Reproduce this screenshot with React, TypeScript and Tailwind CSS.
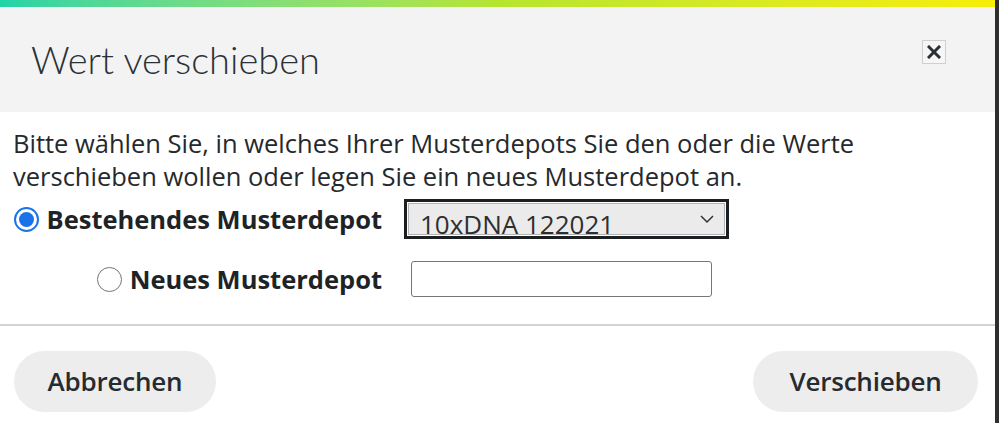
import React from 'react';

const Radio = ({ checked }: { checked?: boolean }) =>
  checked ? (
    <span className="flex h-[25px] w-[25px] shrink-0 items-center justify-center rounded-full border-2 border-[#1a73e8] bg-white">
      <span className="h-[15px] w-[15px] rounded-full bg-[#1a73e8]" />
    </span>
  ) : (
    <span className="h-[25px] w-[25px] shrink-0 rounded-full border-[1.5px] border-[#767676] bg-white" />
  );

const App: React.FC = () => {
  return (
    <div className="flex h-[423px] w-[999px] bg-[#2e2e2e] font-['Open_Sans',sans-serif] text-[#23282c]">
      <div className="flex w-[995px] flex-col bg-white">
        <div className="h-[7px] bg-linear-to-r from-[#1fd3a6] via-[#b6e52f] to-[#f6ee06]" />

        {/* header */}
        <div className="flex h-[105px] items-start justify-between bg-[#f3f3f3] pl-[31px] pr-[49px]">
          <h2 className="pt-[31px] font-['Lato',sans-serif] text-[38px] font-light leading-[42px] text-[#2a3136]">
            Wert verschieben
          </h2>
          <button className="mt-[33px] flex h-[24px] w-[24px] items-center justify-center border border-[#cfcfcf] bg-[#f6f6f6]">
            <svg width="14" height="14" viewBox="0 0 14 14">
              <path d="M2 2 L12 12 M12 2 L2 12" stroke="#2a3136" strokeWidth="3" strokeLinecap="square" />
            </svg>
          </button>
        </div>

        {/* body */}
        <div className="px-[12px] pb-[26px] pt-[15px]">
          <p className="pl-[1px] text-[25.5px] leading-[33px] text-[#26292c]">
            Bitte wählen Sie, in welches Ihrer Musterdepots Sie den oder die Werte
            <br />
            verschieben wollen oder legen Sie ein neues Musterdepot an.
          </p>

          <div className="mt-[6px] grid grid-cols-[370px_1fr] items-center gap-x-[22px] gap-y-[21px]">
            <label className="flex items-center justify-end gap-[8px] text-[25.5px] font-bold text-[#1e2326]">
              <Radio checked />
              <span>Bestehendes Musterdepot</span>
            </label>
            <div className="h-[40px] w-[325px] border-[3px] border-[#1b1f22] bg-white p-[1px]">
              <div className="flex h-full items-end justify-between overflow-hidden border border-[#b3b3b3] bg-[#ebebeb] pl-[11px] pr-[9px]">
                <span className="-mb-[7px] text-[26px] leading-[34px] text-[#2f2f2f]">10xDNA 122021</span>
                <svg width="16" height="10" viewBox="0 0 16 10" className="self-center">
                  <path d="M2 2 L8 8 L14 2" fill="none" stroke="#333" strokeWidth="1.5" />
                </svg>
              </div>
            </div>

            <label className="flex items-center justify-end gap-[8px] text-[25.5px] font-bold text-[#1e2326]">
              <Radio />
              <span>Neues Musterdepot</span>
            </label>
            <input className="ml-[7px] h-[36px] w-[301px] rounded-[3px] border border-[#767676] bg-white" />
          </div>
        </div>

        <div className="border-t-2 border-[#d3d3d3]" />

        {/* footer */}
        <div className="flex items-start justify-between pl-[14px] pr-[17px] pt-[25px]">
          <button className="h-[61px] w-[202px] rounded-full bg-[#ededed] text-[26px] font-semibold tracking-[-0.2px] text-[#262b2f]">
            Abbrechen
          </button>
          <button className="h-[61px] w-[225px] rounded-full bg-[#ededed] text-[26px] font-semibold tracking-[-0.2px] text-[#262b2f]">
            Verschieben
          </button>
        </div>
      </div>
    </div>
  );
};

export default App;
